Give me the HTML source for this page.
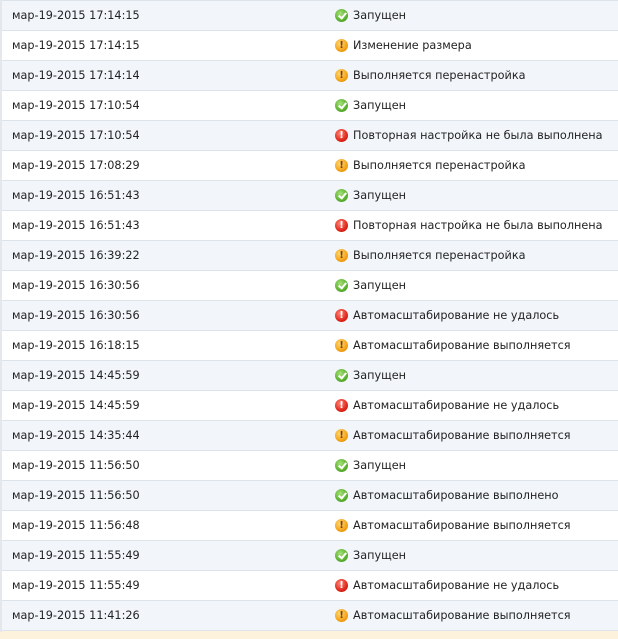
<!DOCTYPE html>
<html><head><meta charset="utf-8"><style>
html,body{margin:0;padding:0;width:618px;height:639px;overflow:hidden;background:#fdf3dc;font-family:"DejaVu Sans","Liberation Sans",sans-serif;}
.t{position:absolute;left:0;top:0;width:616px;border-left:2px solid #e4e8ed;border-right:1px solid #e4e8ed;}
.r{height:29px;border-top:1px solid #dde3ea;position:relative;font-size:11.25px;color:#222;line-height:29px;white-space:nowrap}
.r:nth-child(odd){background:#f2f6fa}
.r:nth-child(even){background:#fff}
.d{position:absolute;left:10px;top:0}
.i{position:absolute;left:333px;top:8px;width:13px;height:13px;border-radius:50%;}
.s{position:absolute;left:351px;top:0}
.g{background:radial-gradient(circle at 40% 35%,#a6e07a,#5cb030 60%,#3f8d1f)}
.g:after{content:"";position:absolute;width:3px;height:6px;border:solid #fff;border-width:0 2px 2px 0;transform:rotate(40deg);left:5px;top:2px}
.o{background:radial-gradient(circle at 40% 35%,#ffd97a,#f3a316 60%,#d57d05)}
.e{background:radial-gradient(circle at 40% 35%,#ff8a7a,#e0261b 60%,#b3140b)}
.o:after,.e:after{content:"!";position:absolute;left:0;top:0;width:13px;height:13px;line-height:13px;text-align:center;font-size:10px;font-weight:bold;color:#fff}
.o:after{color:#7a3d00}
.end{height:1px;border-top:1px solid #dde3ea}
</style></head><body><div class="t">
<div class="r"><span class="d">мар-19-2015 17:14:15</span><span class="i g"></span><span class="s">Запущен</span></div>
<div class="r"><span class="d">мар-19-2015 17:14:15</span><span class="i o"></span><span class="s">Изменение размера</span></div>
<div class="r"><span class="d">мар-19-2015 17:14:14</span><span class="i o"></span><span class="s">Выполняется перенастройка</span></div>
<div class="r"><span class="d">мар-19-2015 17:10:54</span><span class="i g"></span><span class="s">Запущен</span></div>
<div class="r"><span class="d">мар-19-2015 17:10:54</span><span class="i e"></span><span class="s">Повторная настройка не была выполнена</span></div>
<div class="r"><span class="d">мар-19-2015 17:08:29</span><span class="i o"></span><span class="s">Выполняется перенастройка</span></div>
<div class="r"><span class="d">мар-19-2015 16:51:43</span><span class="i g"></span><span class="s">Запущен</span></div>
<div class="r"><span class="d">мар-19-2015 16:51:43</span><span class="i e"></span><span class="s">Повторная настройка не была выполнена</span></div>
<div class="r"><span class="d">мар-19-2015 16:39:22</span><span class="i o"></span><span class="s">Выполняется перенастройка</span></div>
<div class="r"><span class="d">мар-19-2015 16:30:56</span><span class="i g"></span><span class="s">Запущен</span></div>
<div class="r"><span class="d">мар-19-2015 16:30:56</span><span class="i e"></span><span class="s">Автомасштабирование не удалось</span></div>
<div class="r"><span class="d">мар-19-2015 16:18:15</span><span class="i o"></span><span class="s">Автомасштабирование выполняется</span></div>
<div class="r"><span class="d">мар-19-2015 14:45:59</span><span class="i g"></span><span class="s">Запущен</span></div>
<div class="r"><span class="d">мар-19-2015 14:45:59</span><span class="i e"></span><span class="s">Автомасштабирование не удалось</span></div>
<div class="r"><span class="d">мар-19-2015 14:35:44</span><span class="i o"></span><span class="s">Автомасштабирование выполняется</span></div>
<div class="r"><span class="d">мар-19-2015 11:56:50</span><span class="i g"></span><span class="s">Запущен</span></div>
<div class="r"><span class="d">мар-19-2015 11:56:50</span><span class="i g"></span><span class="s">Автомасштабирование выполнено</span></div>
<div class="r"><span class="d">мар-19-2015 11:56:48</span><span class="i o"></span><span class="s">Автомасштабирование выполняется</span></div>
<div class="r"><span class="d">мар-19-2015 11:55:49</span><span class="i g"></span><span class="s">Запущен</span></div>
<div class="r"><span class="d">мар-19-2015 11:55:49</span><span class="i e"></span><span class="s">Автомасштабирование не удалось</span></div>
<div class="r"><span class="d">мар-19-2015 11:41:26</span><span class="i o"></span><span class="s">Автомасштабирование выполняется</span></div>
<div class="end"></div>
</div></body></html>
